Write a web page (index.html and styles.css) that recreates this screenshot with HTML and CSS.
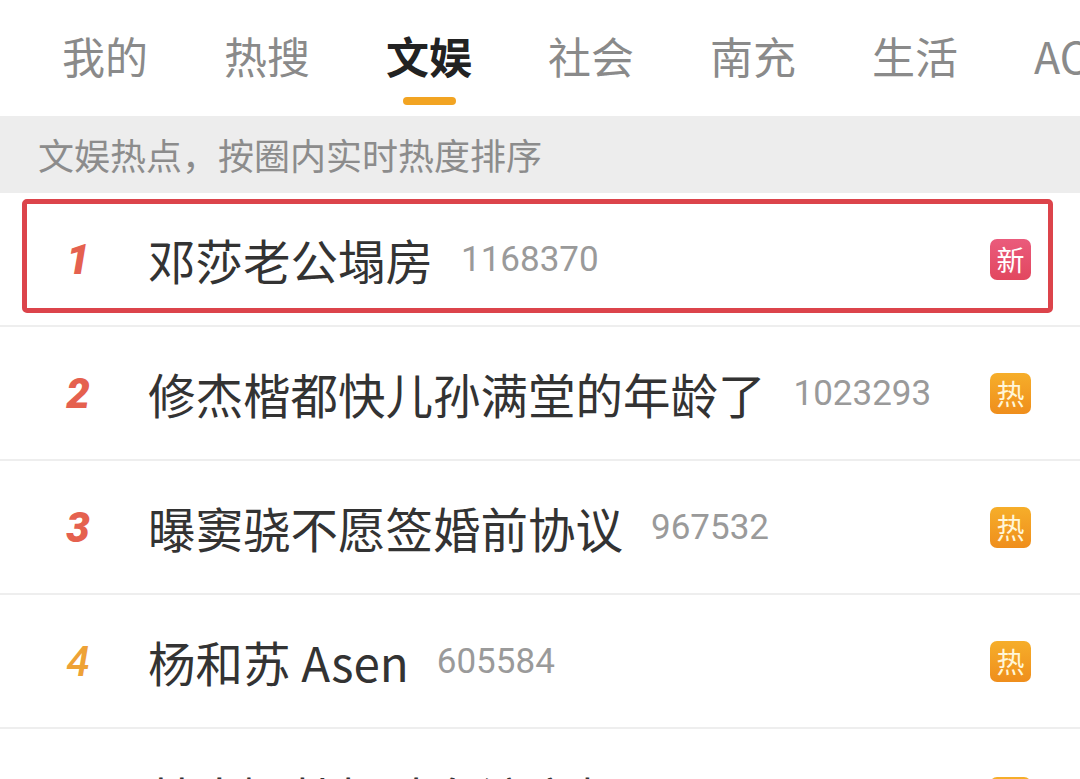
FILE: index.html
```html
<!DOCTYPE html>
<html>
<head>
<meta name="viewport" content="width=device-width, initial-scale=1">
<link rel="stylesheet" href="styles.css">
</head>
<body>

<!-- channel tabs -->
<div class="tabs">
  <div class="tab">我的</div>
  <div class="tab">热搜</div>
  <div class="tab active">文娱<span class="bar"></span></div>
  <div class="tab">社会</div>
  <div class="tab">南充</div>
  <div class="tab">生活</div>
  <div class="tab">ACG</div>
</div>

<div class="tip">文娱热点，按圈内实时热度排序</div>

<ul class="list">
  <li class="row marked">
    <span class="rank top">1</span>
    <span class="title">邓莎老公塌房</span>
    <span class="count">1168370</span>
    <span class="tag new">新</span>
  </li>
  <li class="row">
    <span class="rank top">2</span>
    <span class="title">修杰楷都快儿孙满堂的年龄了</span>
    <span class="count">1023293</span>
    <span class="tag hot">热</span>
  </li>
  <li class="row">
    <span class="rank top">3</span>
    <span class="title">曝窦骁不愿签婚前协议</span>
    <span class="count">967532</span>
    <span class="tag hot">热</span>
  </li>
  <li class="row">
    <span class="rank">4</span>
    <span class="title">杨和苏 Asen</span>
    <span class="count">605584</span>
    <span class="tag hot">热</span>
  </li>
  <li class="row">
    <span class="rank">5</span>
    <span class="title">林大颖杜恒谈条流言相更</span>
    <span class="count">583120</span>
    <span class="tag hot">热</span>
  </li>
</ul>

</body>
</html>
```

FILE: styles.css
```css
body {
  margin: 0;
  background: #fff;
  font-family: Roboto, "Noto Sans CJK SC", sans-serif;
  overflow: hidden;
}

.tabs {
  display: flex;
  gap: 76px;
  padding: 29px 0 10px 62px;
  height: 77px;
  white-space: nowrap;
  overflow: hidden;
}

.tab {
  display: flex;
  flex-direction: column;
  align-items: center;
  font-family: "Noto Sans CJK SC", sans-serif;
  font-size: 43px;
  line-height: 52px;
  color: #8a8a8a;
}

.tab.active {
  color: #222;
  font-weight: 700;
}

.tab .bar {
  width: 53px;
  height: 8px;
  margin-top: 16px;
  border-radius: 4px;
  background: #f2a422;
}

.tip {
  height: 77px;
  line-height: 77px;
  padding-left: 38px;
  background: #ededed;
  font-family: "Noto Sans CJK SC", sans-serif;
  font-size: 36px;
  color: #8c8c8c;
}

.list {
  margin: 0;
  padding: 0;
  list-style: none;
}

.row {
  position: relative;
  display: flex;
  align-items: center;
  height: 132px;
  border-bottom: 2px solid #eeeeee;
}

/* red annotation box over the first row */
.row.marked::after {
  content: "";
  position: absolute;
  left: 22px;
  right: 27px;
  top: 6px;
  bottom: 12px;
  border: 5px solid #dc444b;
  border-radius: 5px;
}

.rank {
  width: 40px;
  margin-left: 58px;
  text-align: center;
  font-size: 42px;
  font-style: italic;
  font-weight: 500;
  color: #eea236;
}

.rank.top {
  font-weight: 900;
  color: #e5614f;
}

.title {
  margin-left: 50px;
  font-family: "Noto Sans CJK SC", sans-serif;
  font-size: 47.5px;
  color: #333;
}

.count {
  margin-left: 28px;
  font-size: 35px;
  color: #9a9a9a;
}

.tag {
  margin-left: auto;
  margin-right: 49px;
  width: 41px;
  height: 41px;
  line-height: 41px;
  border-radius: 7px;
  text-align: center;
  font-family: "Noto Sans CJK SC", sans-serif;
  font-size: 28px;
  color: #fff;
}

.tag.new {
  background: linear-gradient(#ea5b7c, #e2475f);
}

.tag.hot {
  background: linear-gradient(#f6ae2a, #ef8e1c);
  color: #fff6d8;
}

.row:last-child {
  padding-top: 2px;
}
```
